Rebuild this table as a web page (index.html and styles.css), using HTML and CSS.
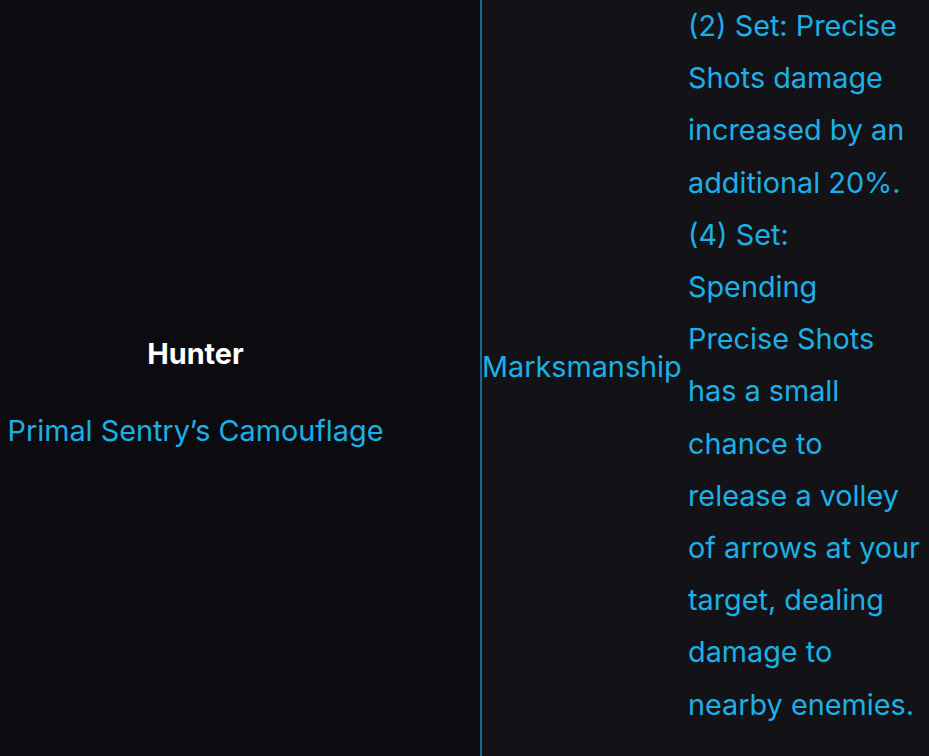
FILE: index.html
```html
<!DOCTYPE html>
<html>
<head>
<meta charset="utf-8">
<link rel="stylesheet" href="styles.css">
</head>
<body>
<div class="row">
  <div class="class-cell">
    <div class="class-inner">
      <div class="class-name">Hunter</div>
      <div class="set-name">Primal Sentry’s Camouflage</div>
    </div>
  </div>
  <div class="spec-cell">
    <div class="spec">Marksmanship</div>
    <div class="desc">(2) Set: Precise Shots damage increased by an additional 20%. (4) Set: Spending Precise Shots has a small chance to release a volley of arrows at your target, dealing damage to nearby enemies.</div>
  </div>
</div>
</body>
</html>
```
FILE: styles.css
```css
html, body {
  margin: 0;
  padding: 0;
  height: 756px;
  overflow: hidden;
  background: #131317;
  font-family: Inter, "Noto Sans", sans-serif;
  font-size: 28.8px;
}
.row {
  display: flex;
  height: 756px;
}
.class-cell {
  width: 480px;
  background: #0c0c10;
  flex: none;
}
.class-inner {
  width: 391px;
  padding-top: 328px;
  text-align: center;
}
.class-name {
  color: #ffffff;
  font-weight: 700;
  line-height: 52px;
}
.set-name {
  color: #1bb0e6;
  line-height: 52px;
  margin-top: 25px;
}
.spec-cell {
  flex: 1;
  display: flex;
  border-left: 2px solid #1a6b90;
  background: #131317;
  align-items: flex-start;
}
.spec {
  color: #1bb0e6;
  height: 732px;
  display: flex;
  align-items: center;
  width: 206px;
  flex: none;
}
.desc {
  color: #1bb0e6;
  line-height: 52.2px;
  width: 234px;
}
```
